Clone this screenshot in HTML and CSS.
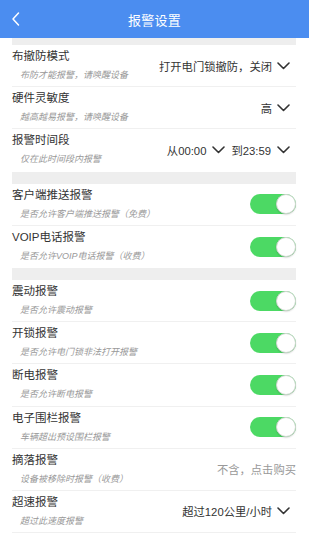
FILE: index.html
```html
<!DOCTYPE html>
<html lang="zh-CN">
<head>
<meta charset="utf-8">
<title>报警设置</title>
<link rel="stylesheet" href="styles.css">
</head>
<body>
<header class="topbar">
  <svg class="back" width="10" height="16" viewBox="0 0 10 16"><polyline points="7.5,2 2,8 7.5,14" fill="none" stroke="#fff" stroke-width="1.5" stroke-linecap="round" stroke-linejoin="round"/></svg>
  <h1 class="title">报警设置</h1>
</header>
<main class="list">
  <div class="gap gap-top"></div>
  <div class="row">
    <div class="info"><div class="name">布撤防模式</div><div class="desc">布防才能报警，请唤醒设备</div></div>
    <div class="value">打开电门锁撤防，关闭<svg class="chev" width="13" height="8" viewBox="0 0 13 8"><polyline points="1,1 6.5,6.5 12,1" fill="none" stroke="#333" stroke-width="1.6" stroke-linecap="round" stroke-linejoin="round"/></svg></div>
  </div>
  <div class="row">
    <div class="info"><div class="name">硬件灵敏度</div><div class="desc">越高越易报警，请唤醒设备</div></div>
    <div class="value">高<svg class="chev" width="13" height="8" viewBox="0 0 13 8"><polyline points="1,1 6.5,6.5 12,1" fill="none" stroke="#333" stroke-width="1.6" stroke-linecap="round" stroke-linejoin="round"/></svg></div>
  </div>
  <div class="row row-last">
    <div class="info"><div class="name">报警时间段</div><div class="desc">仅在此时间段内报警</div></div>
    <div class="value value-wide">从00:00<svg class="chev" width="13" height="8" viewBox="0 0 13 8"><polyline points="1,1 6.5,6.5 12,1" fill="none" stroke="#333" stroke-width="1.6" stroke-linecap="round" stroke-linejoin="round"/></svg>到23:59<svg class="chev" width="13" height="8" viewBox="0 0 13 8"><polyline points="1,1 6.5,6.5 12,1" fill="none" stroke="#333" stroke-width="1.6" stroke-linecap="round" stroke-linejoin="round"/></svg></div>
  </div>
  <div class="gap"></div>
  <div class="row">
    <div class="info"><div class="name">客户端推送报警</div><div class="desc">是否允许客户端推送报警（免费）</div></div>
    <div class="switch"><span class="knob"></span></div>
  </div>
  <div class="row row-last">
    <div class="info"><div class="name">VOIP电话报警</div><div class="desc">是否允许VOIP电话报警（收费）</div></div>
    <div class="switch"><span class="knob"></span></div>
  </div>
  <div class="gap"></div>
  <div class="row">
    <div class="info"><div class="name">震动报警</div><div class="desc">是否允许震动报警</div></div>
    <div class="switch"><span class="knob"></span></div>
  </div>
  <div class="row">
    <div class="info"><div class="name">开锁报警</div><div class="desc">是否允许电门锁非法打开报警</div></div>
    <div class="switch"><span class="knob"></span></div>
  </div>
  <div class="row">
    <div class="info"><div class="name">断电报警</div><div class="desc">是否允许断电报警</div></div>
    <div class="switch"><span class="knob"></span></div>
  </div>
  <div class="row">
    <div class="info"><div class="name">电子围栏报警</div><div class="desc">车辆超出预设围栏报警</div></div>
    <div class="switch"><span class="knob"></span></div>
  </div>
  <div class="row">
    <div class="info"><div class="name">摘落报警</div><div class="desc">设备被移除时报警（收费）</div></div>
    <div class="value value-muted">不含，点击购买</div>
  </div>
  <div class="row">
    <div class="info"><div class="name">超速报警</div><div class="desc">超过此速度报警</div></div>
    <div class="value">超过120公里/小时<svg class="chev" width="13" height="8" viewBox="0 0 13 8"><polyline points="1,1 6.5,6.5 12,1" fill="none" stroke="#333" stroke-width="1.6" stroke-linecap="round" stroke-linejoin="round"/></svg></div>
  </div>
</main>
</body>
</html>
```

FILE: styles.css
```css
* { box-sizing: border-box; }
html, body {
  margin: 0;
  padding: 0;
  background: #fff;
  font-family: "Liberation Sans", "Noto Sans CJK SC", sans-serif;
  color: #333;
}
.topbar {
  position: relative;
  height: 38px;
  background: #4b8df0;
  display: flex;
  align-items: center;
  justify-content: center;
}
.back {
  position: absolute;
  left: 11px;
  top: 11px;
}
.title {
  margin: 0;
  font-size: 13px;
  font-weight: normal;
  color: #fff;
  letter-spacing: 0.3px;
}
.list {
  padding: 0 13px 0 12px;
}
.gap {
  height: 12px;
  background: #eeeeee;
}
.gap-top {
  height: 7px;
}
.row {
  height: 42.2px;
  border-bottom: 1px solid #f0f0f0;
  display: flex;
  align-items: center;
  justify-content: space-between;
}
.row-last {
  border-bottom: none;
}
.info {
  display: flex;
  flex-direction: column;
  align-self: stretch;
  padding-top: 4px;
}
.name {
  font-size: 11.5px;
  line-height: 15px;
  color: #333;
  white-space: nowrap;
}
.desc {
  margin-top: 5px;
  padding-left: 8px;
  font-size: 9px;
  line-height: 13px;
  color: #999;
  font-style: italic;
  white-space: nowrap;
}
.value {
  display: flex;
  align-items: center;
  gap: 5px;
  padding-right: 6px;
  font-size: 11.3px;
  color: #333;
  white-space: nowrap;
}
.value-wide {
  gap: 6px;
}
.value-muted {
  color: #999;
  padding-right: 0;
}
.chev {
  display: block;
}
.switch {
  position: relative;
  width: 46px;
  height: 20px;
  border-radius: 10px;
  background: #4cd964;
  flex: none;
}
.knob {
  position: absolute;
  right: 0;
  top: 0;
  width: 20px;
  height: 20px;
  border-radius: 50%;
  background: #fff;
  border: 1px solid #cfd6cf;
  box-shadow: 0 1px 1.5px rgba(0,0,0,0.15);
}
```
